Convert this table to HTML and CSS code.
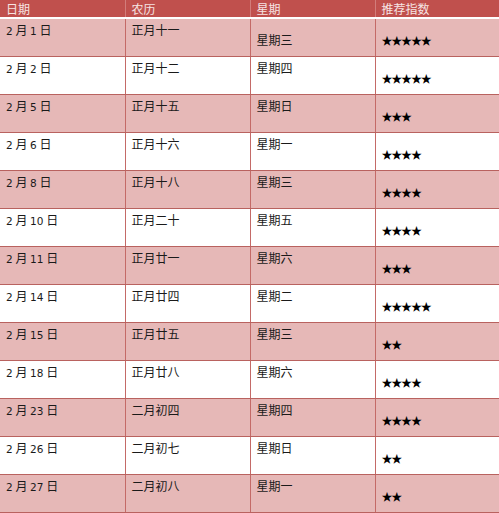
FILE: index.html
```html
<!DOCTYPE html>
<html lang="zh">
<head>
<meta charset="utf-8">
<link rel="stylesheet" href="styles.css">
</head>
<body>
<table class="tbl">
  <colgroup><col class="c1"><col class="c2"><col class="c3"><col class="c4"></colgroup>
  <thead>
    <tr><th>日期</th><th>农历</th><th>星期</th><th>推荐指数</th></tr>
  </thead>
  <tbody>
    <tr class="odd"><td><span class="n">2</span> 月 <span class="n">1</span> 日</td><td>正月十一</td><td class="low">星期三</td><td class="low stars">★★★★★</td></tr>
    <tr><td><span class="n">2</span> 月 <span class="n">2</span> 日</td><td>正月十二</td><td>星期四</td><td class="low stars">★★★★★</td></tr>
    <tr class="odd"><td><span class="n">2</span> 月 <span class="n">5</span> 日</td><td>正月十五</td><td>星期日</td><td class="low stars">★★★</td></tr>
    <tr><td><span class="n">2</span> 月 <span class="n">6</span> 日</td><td>正月十六</td><td>星期一</td><td class="low stars">★★★★</td></tr>
    <tr class="odd"><td><span class="n">2</span> 月 <span class="n">8</span> 日</td><td>正月十八</td><td>星期三</td><td class="low stars">★★★★</td></tr>
    <tr><td><span class="n">2</span> 月 <span class="n">10</span> 日</td><td>正月二十</td><td>星期五</td><td class="low stars">★★★★</td></tr>
    <tr class="odd"><td><span class="n">2</span> 月 <span class="n">11</span> 日</td><td>正月廿一</td><td>星期六</td><td class="low stars">★★★</td></tr>
    <tr><td><span class="n">2</span> 月 <span class="n">14</span> 日</td><td>正月廿四</td><td>星期二</td><td class="low stars">★★★★★</td></tr>
    <tr class="odd"><td><span class="n">2</span> 月 <span class="n">15</span> 日</td><td>正月廿五</td><td>星期三</td><td class="low stars">★★</td></tr>
    <tr><td><span class="n">2</span> 月 <span class="n">18</span> 日</td><td>正月廿八</td><td>星期六</td><td class="low stars">★★★★</td></tr>
    <tr class="odd"><td><span class="n">2</span> 月 <span class="n">23</span> 日</td><td>二月初四</td><td>星期四</td><td class="low stars">★★★★</td></tr>
    <tr><td><span class="n">2</span> 月 <span class="n">26</span> 日</td><td>二月初七</td><td>星期日</td><td class="low stars">★★</td></tr>
    <tr class="odd"><td><span class="n">2</span> 月 <span class="n">27</span> 日</td><td>二月初八</td><td>星期一</td><td class="low stars">★★</td></tr>
  </tbody>
</table>
</body>
</html>
```
FILE: styles.css
```css
html, body {
  margin: 0;
  padding: 0;
  background: #ffffff;
}
body {
  font-family: "Noto Sans CJK SC", "Noto Sans", sans-serif;
  font-size: 12px;
  color: #1a1a1a;
  width: 499px;
  height: 513px;
  overflow: hidden;
}
.tbl {
  border-collapse: collapse;
  table-layout: fixed;
  width: 499px;
}
.c1 { width: 125px; }
.c2 { width: 125px; }
.c3 { width: 125px; }
.c4 { width: 124px; }
.tbl th {
  background: #c0504d;
  color: #f6e4e3;
  font-weight: normal;
  text-align: left;
  height: 17px;
  padding: 0 0 0 6px;
  line-height: 17px;
  border-bottom: 2px solid #ffffff;
  border-left: 1px solid #d27d7b;
  box-sizing: border-box;
  vertical-align: middle;
}
.tbl th:first-child { border-left: none; }
.tbl td {
  height: 38px;
  box-sizing: border-box;
  padding: 3px 0 0 6px;
  line-height: 16px;
  vertical-align: top;
  border-bottom: 1px solid #b9625f;
  border-left: 1px solid #c46a67;
  background: #ffffff;
}
.tbl td:first-child { border-left: none; }
.tbl tr.odd td { background: #e6b8b7; }
.tbl td.low { padding-top: 13px; }
.stars {
  font-family: "Noto Sans CJK SC", sans-serif;
  font-size: 11px;
  letter-spacing: -1.2px;
  color: #000000;
}
.n {
  font-family: "DejaVu Sans", sans-serif;
  font-size: 10.5px;
}
```
